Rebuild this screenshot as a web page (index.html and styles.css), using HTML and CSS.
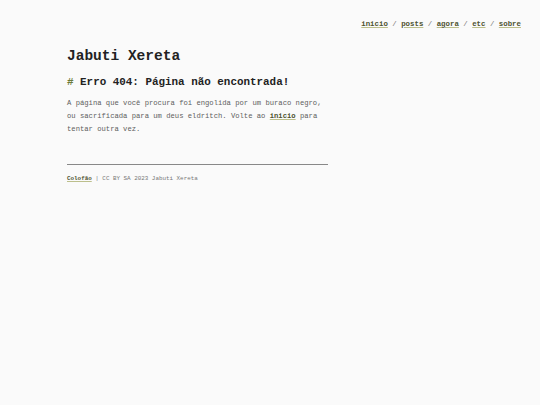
FILE: index.html
```html
<!DOCTYPE html>
<html lang="pt">
<head>
<meta charset="utf-8">
<link rel="stylesheet" href="styles.css">
</head>
<body>
<nav class="nav"><a href="#">inicio</a> / <a href="#">posts</a> / <a href="#">agora</a> / <a href="#">etc</a> / <a href="#">sobre</a></nav>
<main class="main">
  <h1 class="site-title">Jabuti Xereta</h1>
  <h2 class="heading"><span class="hash">#</span> Erro 404: Página não encontrada!</h2>
  <p class="text">A página que você procura foi engolida por um buraco negro, ou sacrificada para um deus eldritch. Volte ao <a href="#">inicio</a> para tentar outra vez.</p>
  <footer class="footer"><a href="#">Colofão</a> | CC BY SA 2023 Jabuti Xereta</footer>
</main>
</body>
</html>
```
FILE: styles.css
```css
html, body {
  margin: 0;
  padding: 0;
  background: #fafafa;
}
body {
  font-family: "Liberation Mono", "DejaVu Sans Mono", monospace;
  color: #333;
}
a {
  color: #4d5230;
  font-weight: bold;
  text-decoration: underline;
  text-decoration-color: #bcbf8c;
  text-underline-offset: 1px;
}
.nav {
  text-align: right;
  padding: 19px 19px 0 0;
  font-size: 7.4px;
  line-height: 10px;
  color: #777;
}
.main {
  margin-left: 67px;
  width: 261px;
}
.site-title {
  margin: 18px 0 0 0;
  font-size: 14.5px;
  line-height: 18px;
  font-weight: bold;
  color: #222;
}
.heading {
  margin: 10px 0 0 0;
  font-size: 10.9px;
  line-height: 14px;
  font-weight: bold;
  color: #222;
}
.hash {
  color: #6b7a3a;
}
.text {
  margin: 8px 0 0 0;
  font-size: 7.2px;
  line-height: 13px;
  color: #5e5e5e;
}
.footer {
  margin-top: 28px;
  border-top: 1px solid #888;
  padding-top: 9px;
  font-size: 5.9px;
  line-height: 10px;
  color: #777;
}
```
